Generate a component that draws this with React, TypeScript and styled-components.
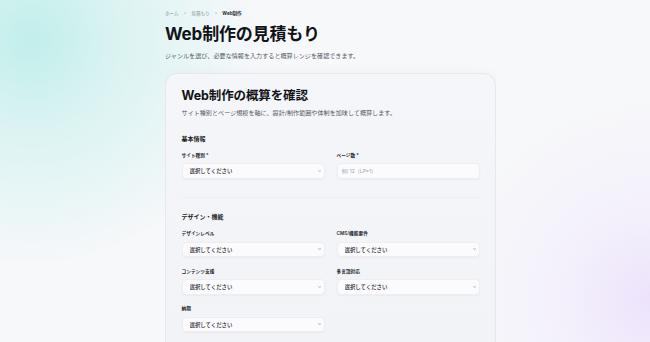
import React from "react";
import styled, { createGlobalStyle } from "styled-components";

const Global = createGlobalStyle`
  * { box-sizing: border-box; }
  html, body { margin: 0; padding: 0; }
  body {
    font-family: "Inter", "Noto Sans CJK JP", sans-serif;
    color: #16181d;
    background:
      radial-gradient(circle at 30px 40px, rgba(190, 238, 234, 0.95) 0, rgba(200, 240, 237, 0.6) 90px, rgba(247, 248, 250, 0) 230px),
      radial-gradient(circle at 650px 300px, rgba(236, 226, 252, 0.95) 0, rgba(240, 233, 252, 0.5) 90px, rgba(247, 248, 250, 0) 200px),
      #f7f8fa;
    min-height: 342px;
    overflow: hidden;
  }
`;

const Page = styled.main`
  width: 331px;
  margin-left: 165px;
  padding-top: 11px;
  height: 342px;
  overflow: hidden;
`;

const Breadcrumb = styled.nav`
  display: flex;
  align-items: center;
  gap: 5px;
  font-size: 4.6px;
  line-height: 6px;
  color: #8a8f99;
`;

const Crumb = styled.span<{ $current?: boolean }>`
  color: ${(p) => (p.$current ? "#2a2d33" : "#8a8f99")};
  font-weight: ${(p) => (p.$current ? 700 : 400)};
`;

const Sep = styled.span`
  color: #a0a4ad;
  font-size: 4px;
`;

const Title = styled.h1`
  margin: 6px 0 0;
  font-size: 17px;
  line-height: 23px;
  font-weight: 700;
  letter-spacing: -0.01em;
  color: #111318;
`;

const Lead = styled.p`
  margin: 5px 0 0;
  font-size: 6.1px;
  line-height: 9px;
  color: #555a64;
`;

const Card = styled.section`
  margin-top: 12.5px;
  background: linear-gradient(180deg, #f5f6f9 0%, #f2f3f7 100%);
  border: 0.5px solid #e6e8ed;
  border-radius: 12px;
  box-shadow: 0 6px 18px rgba(20, 24, 40, 0.07), 0 1px 2px rgba(20, 24, 40, 0.04);
  padding: 13px 15.5px 30px;
`;

const CardTitle = styled.h2`
  margin: 0;
  font-size: 12.5px;
  line-height: 17px;
  font-weight: 700;
  letter-spacing: -0.01em;
  color: #111318;
`;

const CardLead = styled.p`
  margin: 4px 0 0;
  font-size: 6.1px;
  line-height: 9px;
  color: #555a64;
`;

const Section = styled.div<{ $first?: boolean }>`
  margin-top: ${(p) => (p.$first ? "17px" : "0")};
  padding-top: ${(p) => (p.$first ? "0" : "15px")};
`;

const SectionTitle = styled.h3`
  margin: 0 0 9px;
  font-size: 6px;
  line-height: 9px;
  font-weight: 700;
  color: #1b1e24;
`;

const Grid = styled.div`
  display: grid;
  grid-template-columns: 1fr 1fr;
  column-gap: 12px;
  row-gap: 10.5px;
  align-items: start;
`;

const Field = styled.label`
  display: flex;
  flex-direction: column;
  gap: 4.5px;
`;

const Label = styled.span`
  display: block;
  height: 7px;
  font-size: 4.7px;
  line-height: 7px;
  font-weight: 600;
  color: #25282e;
  white-space: nowrap;
`;

const SelectWrap = styled.div`
  position: relative;
  height: 15.5px;
  font-size: 0;
  line-height: 0;
`;

const Select = styled.select`
  appearance: none;
  -webkit-appearance: none;
  display: block;
  width: 100%;
  height: 15.5px;
  margin: 0;
  padding: 0 12px 0 7px;
  font-family: inherit;
  font-size: 5.4px;
  font-weight: 500;
  line-height: 15px;
  color: #1d2026;
  background: #fbfbfd;
  border: 0.5px solid #eceef2;
  border-radius: 4px;
  box-shadow: 0 1px 2px rgba(20, 24, 40, 0.04);
  outline: none;
`;

const Chevron = styled.svg`
  position: absolute;
  right: 3.5px;
  top: 50%;
  width: 3.5px;
  height: 2.5px;
  transform: translateY(-50%);
  pointer-events: none;
`;

const Input = styled.input`
  display: block;
  width: 100%;
  height: 15.5px;
  margin: 0;
  padding: 0 4px;
  font-family: inherit;
  font-size: 5px;
  color: #23262c;
  background: #fbfbfd;
  border: 0.5px solid #eceef2;
  border-radius: 4px;
  box-shadow: 0 1px 2px rgba(20, 24, 40, 0.04);
  outline: none;
  &::placeholder { color: #9ea3ad; }
`;

const Divider = styled.hr`
  margin: 18px 0 0;
  border: none;
  height: 0.5px;
  background: #eceef2;
`;

const ChoiceSelect: React.FC<{ name: string }> = ({ name }) => (
  <SelectWrap>
    <Select name={name} defaultValue="">
      <option value="">選択してください</option>
    </Select>
    <Chevron viewBox="0 0 8 5" fill="none">
      <path d="M1 1l3 3 3-3" stroke="#5f646e" strokeWidth="1.1" strokeLinecap="round" strokeLinejoin="round" />
    </Chevron>
  </SelectWrap>
);

export default function App() {
  return (
    <>
      <Global />
      <Page>
        <Breadcrumb>
          <Crumb>ホーム</Crumb>
          <Sep>&gt;</Sep>
          <Crumb>見積もり</Crumb>
          <Sep>&gt;</Sep>
          <Crumb $current>Web制作</Crumb>
        </Breadcrumb>
        <Title>Web制作の見積もり</Title>
        <Lead>ジャンルを選び、必要な情報を入力すると概算レンジを確認できます。</Lead>

        <Card>
          <CardTitle>Web制作の概算を確認</CardTitle>
          <CardLead>サイト種別とページ規模を軸に、設計/制作範囲や体制を加味して概算します。</CardLead>

          <Section $first>
            <SectionTitle>基本情報</SectionTitle>
            <Grid>
              <Field>
                <Label>サイト種別 *</Label>
                <ChoiceSelect name="siteType" />
              </Field>
              <Field>
                <Label>ページ数 *</Label>
                <Input placeholder="例) 12（LP=1）" />
              </Field>
            </Grid>
          </Section>

          <Divider />

          <Section>
            <SectionTitle>デザイン・機能</SectionTitle>
            <Grid>
              <Field>
                <Label>デザインレベル</Label>
                <ChoiceSelect name="design" />
              </Field>
              <Field>
                <Label>CMS/機能要件</Label>
                <ChoiceSelect name="cms" />
              </Field>
              <Field>
                <Label>コンテンツ支援</Label>
                <ChoiceSelect name="content" />
              </Field>
              <Field>
                <Label>多言語対応</Label>
                <ChoiceSelect name="lang" />
              </Field>
              <Field>
                <Label>納期</Label>
                <ChoiceSelect name="deadline" />
              </Field>
            </Grid>
          </Section>
        </Card>
      </Page>
    </>
  );
}
